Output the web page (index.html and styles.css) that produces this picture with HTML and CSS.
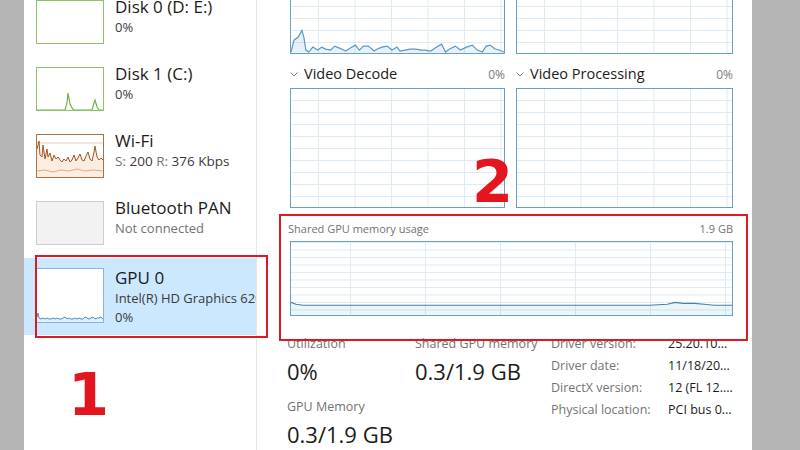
FILE: index.html
```html
<!DOCTYPE html>
<html lang="en">
<head>
    <meta charset="UTF-8">
    <meta name="viewport" content="width=device-width, initial-scale=1.0">
    <title>Task Manager - GPU</title>
    <link rel="stylesheet" href="styles.css">
</head>
<body>
    <div class="window">
        <aside class="sidebar">
            <div class="item">
                <div class="thumb thumb-disk"></div>
                <div class="info">
                    <div class="name">Disk 0 (D: E:)</div>
                    <div class="detail">0%</div>
                </div>
            </div>
            <div class="item">
                <div class="thumb thumb-disk">
                    <svg viewBox="0 0 66 42" preserveAspectRatio="none">
                        <polyline points="0,42 28,42 30,35 31,25 33,36 35,40 37,42 55,42 57,35 58,32 60,39 62,42 66,42" fill="none" stroke="#72b24e" stroke-width="1.2"/>
                    </svg>
                </div>
                <div class="info">
                    <div class="name">Disk 1 (C:)</div>
                    <div class="detail">0%</div>
                </div>
            </div>
            <div class="item">
                <div class="thumb thumb-wifi">
                    <svg viewBox="0 0 66 42" preserveAspectRatio="none">
                        <line x1="0" y1="8" x2="66" y2="8" stroke="#e6cdb9" stroke-width="1"/>
                        <polygon points="0,14 2,6 3,20 5,22 6,10 8,24 10,14 11,22 13,18 15,26 17,20 19,24 21,22 23,25 25,27 27,24 29,26 31,22 33,27 35,25 37,20 39,26 41,23 43,19 45,25 47,26 49,21 51,17 53,24 55,26 57,17 58,11 60,22 62,25 64,23 66,25 66,42 0,42" fill="#fbede1"/>
                        <polyline points="0,36 8,35 16,37 24,35 32,36 40,34 48,36 56,35 66,36" fill="none" stroke="#eaa677" stroke-width="1"/>
                        <polyline points="0,14 2,6 3,20 5,22 6,10 8,24 10,14 11,22 13,18 15,26 17,20 19,24 21,22 23,25 25,27 27,24 29,26 31,22 33,27 35,25 37,20 39,26 41,23 43,19 45,25 47,26 49,21 51,17 53,24 55,26 57,17 58,11 60,22 62,25 64,23 66,25" fill="none" stroke="#a2561f" stroke-width="1"/>
                    </svg>
                </div>
                <div class="info">
                    <div class="name">Wi-Fi</div>
                    <div class="detail detail-wide"><span class="key">S:</span> 200 <span class="key">R:</span> 376 Kbps</div>
                </div>
            </div>
            <div class="item">
                <div class="thumb thumb-bt"></div>
                <div class="info">
                    <div class="name">Bluetooth PAN</div>
                    <div class="detail detail-muted">Not connected</div>
                </div>
            </div>
            <div class="item selected">
                <div class="thumb thumb-gpu">
                    <svg viewBox="0 0 66 53" preserveAspectRatio="none">
                        <polygon points="0,48 1,44 2,49 4,50 6,49 8,50 10,49 12,50 14,50 16,49 18,50 20,49 22,50 24,50 26,49 28,48 30,50 32,49 34,50 36,50 38,49 40,50 42,49 44,50 46,50 48,48 50,49 52,50 54,49 56,48 58,50 60,49 62,49 64,48 66,50 66,53 0,53" fill="#e3eff9"/>
                        <polyline points="0,48 1,44 2,49 4,50 6,49 8,50 10,49 12,50 14,50 16,49 18,50 20,49 22,50 24,50 26,49 28,48 30,50 32,49 34,50 36,50 38,49 40,50 42,49 44,50 46,50 48,48 50,49 52,50 54,49 56,48 58,50 60,49 62,49 64,48 66,50" fill="none" stroke="#4f8cc2" stroke-width="1"/>
                    </svg>
                </div>
                <div class="info">
                    <div class="name">GPU 0</div>
                    <div class="detail">Intel(R) HD Graphics 620</div>
                    <div class="detail">0%</div>
                </div>
            </div>
        </aside>

        <main class="main">
            <div class="graph-pair graph-pair-top">
                <div class="graph">
                    <svg viewBox="0 0 215 120" preserveAspectRatio="none">
                        <polygon points="0,119 3,107 7,104 10,99 11,97 13,104 15,117 18,119 22,114 27,117 31,114 35,116 40,117 44,113 49,115 55,118 60,115 65,112 69,117 73,113 78,113 84,118 87,116 92,114 97,113 102,117 107,114 110,118 115,117 120,116 126,116 131,117 135,117 141,118 147,114 152,111 156,119 160,116 166,113 171,117 177,114 183,112 188,117 193,119 197,113 201,112 206,116 210,117 215,119 215,120 0,120" fill="rgba(17,125,187,0.1)"/>
                        <polyline points="0,119 3,107 7,104 10,99 11,97 13,104 15,117 18,119 22,114 27,117 31,114 35,116 40,117 44,113 49,115 55,118 60,115 65,112 69,117 73,113 78,113 84,118 87,116 92,114 97,113 102,117 107,114 110,118 115,117 120,116 126,116 131,117 135,117 141,118 147,114 152,111 156,119 160,116 166,113 171,117 177,114 183,112 188,117 193,119 197,113 201,112 206,116 210,117 215,119" fill="none" stroke="#5b97c2" stroke-width="1.2"/>
                    </svg>
                </div>
                <div class="graph"></div>
            </div>

            <div class="graph-pair heads">
                <div class="head">
                    <svg class="chev" viewBox="0 0 8 5"><polyline points="0.5,0.5 4,4 7.5,0.5" fill="none" stroke="#7a7a7a" stroke-width="1"/></svg>
                    <span class="head-title">Video Decode</span>
                    <span class="head-pct">0%</span>
                </div>
                <div class="head">
                    <svg class="chev" viewBox="0 0 8 5"><polyline points="0.5,0.5 4,4 7.5,0.5" fill="none" stroke="#7a7a7a" stroke-width="1"/></svg>
                    <span class="head-title">Video Processing</span>
                    <span class="head-pct">0%</span>
                </div>
            </div>

            <div class="graph-pair">
                <div class="graph"></div>
                <div class="graph"></div>
            </div>

            <section class="shared">
                <div class="shared-head">
                    <span>Shared GPU memory usage</span>
                    <span>1.9 GB</span>
                </div>
                <div class="graph graph-wide">
                    <svg viewBox="0 0 443 75" preserveAspectRatio="none">
                        <polygon points="0,62 5,64 12,65 60,65 120,65 200,65 280,65 360,65 378,64 386,62 394,63 405,63 415,64 425,65 443,65 443,75 0,75" fill="rgba(17,125,187,0.08)"/>
                        <polyline points="0,62 5,64 12,65 60,65 120,65 200,65 280,65 360,65 378,64 386,62 394,63 405,63 415,64 425,65 443,65" fill="none" stroke="#4a7fa8" stroke-width="1.2"/>
                    </svg>
                </div>
            </section>

            <div class="stats">
                <div class="stat-col">
                    <div class="stat-label">Utilization</div>
                    <div class="stat-value">0%</div>
                    <div class="stat-label">GPU Memory</div>
                    <div class="stat-value">0.3/1.9 GB</div>
                </div>
                <div class="stat-col stat-col-mid">
                    <div class="stat-label">Shared GPU memory</div>
                    <div class="stat-value">0.3/1.9 GB</div>
                </div>
                <div class="props">
                    <span class="prop-key">Driver version:</span><span class="prop-val">25.20.10...</span>
                    <span class="prop-key">Driver date:</span><span class="prop-val">11/18/20...</span>
                    <span class="prop-key">DirectX version:</span><span class="prop-val">12 (FL 12....</span>
                    <span class="prop-key">Physical location:</span><span class="prop-val">PCI bus 0...</span>
                </div>
            </div>
        </main>

        <div class="callout callout-1"></div>
        <div class="callout callout-2"></div>
        <div class="mark mark-1">1</div>
        <div class="mark mark-2">2</div>
    </div>
</body>
</html>
```

FILE: styles.css
```css
body {
    margin: 0;
    background: #b4b4b4;
    font-family: "Open Sans", "Noto Sans", sans-serif;
    overflow: hidden;
}

.window {
    position: relative;
    margin-left: 24px;
    width: 728px;
    height: 450px;
    background: #fff;
    display: flex;
    overflow: hidden;
}

/* Left list of devices */
.sidebar {
    width: 232px;
    flex: none;
    border-right: 1px solid #e6e6e6;
}

.item {
    display: flex;
    align-items: flex-start;
    gap: 11px;
    height: 67px;
    padding: 10px 0 0 12px;
    box-sizing: border-box;
}

.item:first-child {
    margin-top: -10px;
}

.item.selected {
    height: 77px;
    background: #cce8ff;
}

.thumb {
    flex: none;
    width: 68px;
    height: 44px;
    box-sizing: border-box;
    border: 1px solid;
    background: #fff;
}

.thumb svg {
    display: block;
    width: 100%;
    height: 100%;
}

.thumb-disk { border-color: #8cc26c; }
.thumb-wifi { border-color: #a87248; }
.thumb-bt { border-color: #cdcdcd; background: #f2f2f2; }
.thumb-gpu { border-color: #86b6e0; height: 55px; }

.info {
    flex: 1 1 auto;
    min-width: 0;
    margin-top: -4px;
    white-space: nowrap;
    overflow: hidden;
}

.selected .info {
    margin-top: -1px;
}

.name {
    font-size: 17px;
    line-height: 22px;
    color: #1b1b1b;
}

.detail {
    font-size: 13px;
    line-height: 19px;
    color: #3a3a3a;
}

.detail-wide {
    font-size: 13.5px;
}

.detail .key,
.detail-muted {
    color: #727272;
}

/* Right side graphs */
.main {
    flex: 1;
    padding: 0 19px 0 33px;
}

.graph-pair {
    display: grid;
    grid-template-columns: 215px 217px;
    column-gap: 11px;
}

.graph-pair-top {
    margin-top: -66px;
}

.graph {
    height: 120px;
    box-sizing: border-box;
    border: 1px solid #6aa0c6;
    background-color: #fff;
    background-image:
        linear-gradient(to bottom, #dcebf6 1px, transparent 1px),
        linear-gradient(to right, #dcebf6 1px, transparent 1px);
    background-size: 36.5px 12px;
    background-position: 27px -1px;
}

.graph svg {
    display: block;
    width: 100%;
    height: 100%;
}

.heads {
    padding: 10px 0 3px;
}

.head {
    display: flex;
    align-items: baseline;
    line-height: 20px;
}

.chev {
    width: 8px;
    height: 5px;
    margin-right: 6px;
    align-self: center;
}

.head-title {
    flex: 1;
    font-size: 14.5px;
    color: #1b1b1b;
}

.head-pct {
    font-size: 12px;
    color: #7a7a7a;
}

.shared {
    padding-top: 13px;
}

.shared-head {
    display: flex;
    justify-content: space-between;
    margin: 0 0 4px -2px;
    font-size: 11px;
    line-height: 16px;
    color: #727272;
}

.graph-wide {
    height: 75px;
    background-size: 75px 7.5px;
    background-position: 59px 0;
}

/* Numbers under the graphs */
.stats {
    display: flex;
    align-items: flex-start;
    margin: 17px 0 0 -3px;
}

.stat-col {
    width: 128px;
    padding-top: 2px;
}

.stat-col-mid {
    width: 136px;
}

.stat-label {
    font-size: 12.5px;
    line-height: 18px;
    color: #737373;
    white-space: nowrap;
}

.stat-value {
    font-size: 22px;
    line-height: 36px;
    color: #1b1b1b;
    margin-bottom: 9px;
    white-space: nowrap;
}

.props {
    display: grid;
    grid-template-columns: 117px auto;
    align-content: start;
    font-size: 12.5px;
    line-height: 22px;
    white-space: nowrap;
}

.prop-key { color: #737373; }
.prop-val { color: #1b1b1b; }

/* Red annotations */
.callout {
    position: absolute;
    box-sizing: border-box;
    border: 2px solid #dc1a24;
}

.callout-1 {
    left: 11px;
    top: 255px;
    width: 233px;
    height: 83px;
}

.callout-2 {
    left: 255px;
    top: 214px;
    width: 469px;
    height: 127px;
}

.mark {
    position: absolute;
    font: bold 59px/1 "DejaVu Sans", sans-serif;
    color: #e3161f;
}

.mark-1 { left: 44px; top: 365px; }
.mark-2 { left: 448px; top: 152px; }
```
